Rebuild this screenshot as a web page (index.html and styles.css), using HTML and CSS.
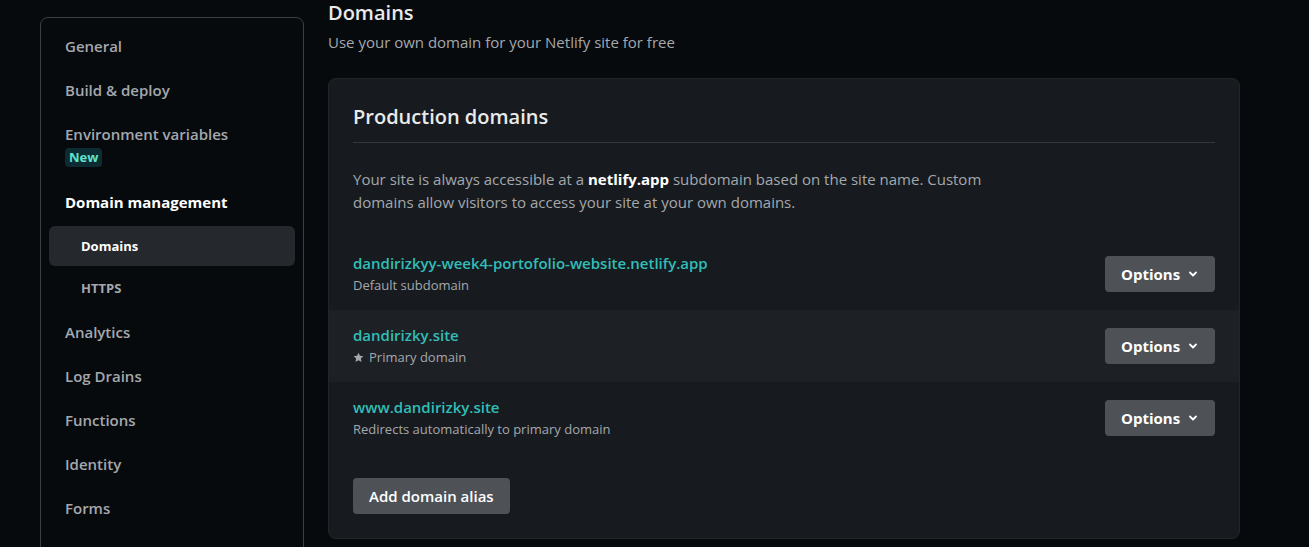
FILE: index.html
```html
<!DOCTYPE html>
<html>
<head>
<meta charset="utf-8">
<link rel="stylesheet" href="styles.css">
</head>
<body>
<div class="page">
  <nav class="sidebar">
    <a class="nav-item">General</a>
    <a class="nav-item">Build &amp; deploy</a>
    <a class="nav-item nav-env">Environment variables<span class="badge">New</span></a>
    <a class="nav-item active-parent">Domain management</a>
    <a class="nav-sub selected">Domains</a>
    <a class="nav-sub last">HTTPS</a>
    <a class="nav-item">Analytics</a>
    <a class="nav-item">Log Drains</a>
    <a class="nav-item">Functions</a>
    <a class="nav-item">Identity</a>
    <a class="nav-item">Forms</a>
    <a class="nav-item">Large Media</a>
  </nav>
  <main class="main">
    <h1 class="title">Domains</h1>
    <p class="subtitle">Use your own domain for your Netlify site for free</p>
    <section class="card">
      <div class="card-head">
        <h2 class="card-title">Production domains</h2>
      </div>
      <p class="desc">Your site is always accessible at a <strong>netlify.app</strong> subdomain based on the site name. Custom domains allow visitors to access your site at your own domains.</p>
      <ul class="domains">
        <li class="domain-row">
          <div class="domain-info">
            <a class="domain-link">dandirizkyy-week4-portofolio-website.netlify.app</a>
            <span class="domain-note">Default subdomain</span>
          </div>
          <button class="btn options">Options <svg class="chev" width="10" height="10" viewBox="0 0 10 10"><path d="M2 3.5 L5 6.5 L8 3.5" fill="none" stroke="#fff" stroke-width="1.8" stroke-linecap="round" stroke-linejoin="round"/></svg></button>
        </li>
        <li class="domain-row alt">
          <div class="domain-info">
            <a class="domain-link">dandirizky.site</a>
            <span class="domain-note"><svg class="star" width="11" height="11" viewBox="0 0 24 24"><path d="M12 1.5l3.2 6.9 7.5.9-5.6 5.1 1.5 7.4L12 18l-6.6 3.8 1.5-7.4L1.3 9.3l7.5-.9z" fill="#a4a8ad"/></svg>Primary domain</span>
          </div>
          <button class="btn options">Options <svg class="chev" width="10" height="10" viewBox="0 0 10 10"><path d="M2 3.5 L5 6.5 L8 3.5" fill="none" stroke="#fff" stroke-width="1.8" stroke-linecap="round" stroke-linejoin="round"/></svg></button>
        </li>
        <li class="domain-row">
          <div class="domain-info">
            <a class="domain-link">www.dandirizky.site</a>
            <span class="domain-note">Redirects automatically to primary domain</span>
          </div>
          <button class="btn options">Options <svg class="chev" width="10" height="10" viewBox="0 0 10 10"><path d="M2 3.5 L5 6.5 L8 3.5" fill="none" stroke="#fff" stroke-width="1.8" stroke-linecap="round" stroke-linejoin="round"/></svg></button>
        </li>
      </ul>
      <div class="card-foot">
        <button class="btn add">Add domain alias</button>
      </div>
    </section>
  </main>
</div>
</body>
</html>
```
FILE: styles.css
```css
* { box-sizing: border-box; }
html, body { margin: 0; padding: 0; }
body {
  background: #070a0d;
  font-family: "Open Sans", "Noto Sans", sans-serif;
  color: #a4a8ad;
  height: 547px;
  overflow: hidden;
}
.page {
  display: flex;
  align-items: flex-start;
  padding-left: 40px;
  gap: 24px;
}
.sidebar {
  flex: none;
  width: 264px;
  margin-top: 17px;
  border: 1px solid #3b3e43;
  border-radius: 8px;
  padding: 12px 8px 0 8px;
  display: flex;
  flex-direction: column;
  height: 560px;
}
.nav-item {
  flex: none;
  display: flex;
  flex-direction: column;
  align-items: flex-start;
  padding: 5px 16px;
  height: 44px;
  font-size: 15px;
  line-height: 22px;
  color: #a4a8ad;
  font-weight: 600;
}
.nav-env { height: 68px; }
.badge {
  margin-top: 3px;
  font-size: 13px;
  line-height: 19px;
  font-weight: 700;
  color: #5fe3cc;
  background: #0d2b33;
  border-radius: 4px;
  padding: 0 4px;
}
.active-parent { color: #fff; font-weight: 700; height: 40px; }
.nav-sub {
  flex: none;
  display: flex;
  align-items: center;
  height: 40px;
  padding: 0 32px;
  font-size: 13px;
  font-weight: 700;
  color: #a4a8ad;
  border-radius: 6px;
  margin-bottom: 2px;
}
.nav-sub.last { margin-bottom: 8px; }
.nav-sub.selected { background: #25282d; color: #fff; }
.main {
  width: 912px;
}
.title {
  margin: 0;
  font-size: 20px;
  line-height: 26px;
  font-weight: 600;
  color: #e9eaeb;
}
.subtitle {
  margin: 5px 0 0;
  font-size: 15px;
  line-height: 22px;
}
.card {
  margin-top: 25px;
  background: #171b1f;
  border: 1px solid #22262b;
  border-radius: 8px;
  padding-bottom: 24px;
}
.card-head {
  margin: 0 24px;
  padding: 25px 0 12px;
  border-bottom: 1px solid #35393e;
}
.card-title {
  margin: 0;
  font-size: 20px;
  line-height: 26px;
  font-weight: 600;
  color: #e9eaeb;
}
.desc {
  margin: 25px 24px 0;
  max-width: 640px;
  font-size: 15px;
  line-height: 23px;
}
.desc strong { color: #fff; font-weight: 700; }
.domains {
  list-style: none;
  margin: 24px 0 0;
  padding: 0;
}
.domain-row {
  display: flex;
  align-items: center;
  justify-content: space-between;
  height: 72px;
  padding: 0 24px;
}
.domain-row.alt { background: #1d2024; }
.domain-info { display: flex; flex-direction: column; }
.domain-link {
  font-size: 15px;
  line-height: 22px;
  font-weight: 600;
  color: #32bdb7;
}
.domain-note {
  font-size: 13px;
  line-height: 22px;
  display: flex;
  align-items: center;
  gap: 5px;
}
.btn {
  font-family: inherit;
  border: none;
  border-radius: 4px;
  background: #4e5257;
  color: #fff;
  font-weight: 700;
  font-size: 15px;
  height: 36px;
  padding: 0 16px;
  display: flex;
  align-items: center;
  gap: 8px;
  white-space: nowrap;
}
.options { width: 110px; }
.card-foot { margin: 24px 24px 0; }
.add { font-weight: 600; }
```
